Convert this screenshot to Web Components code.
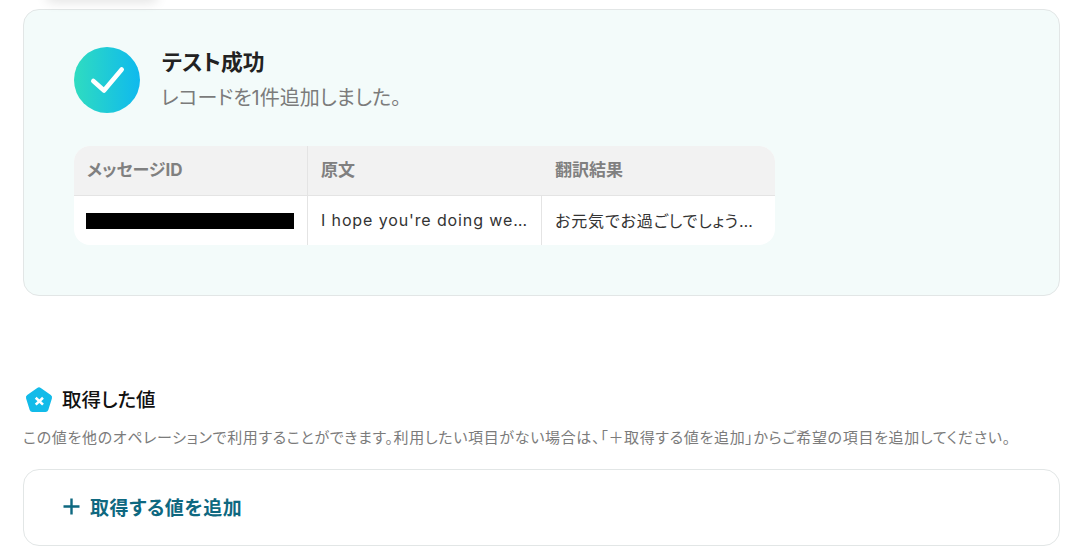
<!DOCTYPE html>
<html lang="ja">
<head>
<meta charset="utf-8">
<title>テスト成功</title>
<style>
html, body { margin: 0; background: #fff; height: 552px; overflow: hidden; }
body { font-family: Inter, "Noto Sans CJK JP", sans-serif; color: #222; font-feature-settings: "palt"; }
</style>
</head>
<body>
<result-page>
  <success-card title-text="テスト成功" message="レコードを1件追加しました。">
    <result-table></result-table>
  </success-card>
  <values-section heading="取得した値" note="この値を他のオペレーションで利用することができます。利用したい項目がない場合は、「＋取得する値を追加」からご希望の項目を追加してください。">
    <add-value-button>取得する値を追加</add-value-button>
  </values-section>
</result-page>

<script>
class ResultPage extends HTMLElement {
    connectedCallback() {
        this.attachShadow({mode: "open"}).innerHTML = `
<style>
:host { display: flex; flex-direction: column; padding: 9px 26px 0 23px; position: relative; height: 552px; box-sizing: border-box; }
.shadow { position: absolute; left: 46px; top: -12px; width: 112px; height: 12px; border-radius: 8px; box-shadow: 0 2px 12px rgba(0,0,0,.12); }
</style>
<div class="shadow"></div>
<slot></slot>`;
    }
}

class SuccessCard extends HTMLElement {
    connectedCallback() {
        this.attachShadow({mode: "open"}).innerHTML = `
<style>
:host { display: block; box-sizing: border-box; height: 287px; padding: 37px 50px 0; background: #f3fbfa; border: 1px solid #e2e6e6; border-radius: 16px; }
.head { display: flex; align-items: center; gap: 21px; margin-bottom: 33px; }
.icon { width: 66px; height: 66px; display: block; flex: none; }
h2 { margin: 0 0 0 1px; font-size: 21.800px; line-height: 30px; font-weight: 700; color: #222; }
p { margin: 6px 0 0; font-size: 20px; line-height: 30px; color: #7b7b7b; }
</style>
<div class="head">
  <svg class="icon" viewBox="0 0 66 66">
    <defs><linearGradient id="g" x1="0" y1="0" x2="1" y2="0"><stop offset="0" stop-color="#2fdcc0"/><stop offset="1" stop-color="#0fb9ee"/></linearGradient></defs>
    <circle cx="33" cy="33" r="33" fill="url(#g)"/>
    <path d="M19.300 34 L30 43.500 L47.700 22.500" fill="none" stroke="#fff" stroke-width="4.600" stroke-linecap="round" stroke-linejoin="round"/>
  </svg>
  <div><h2>${this.getAttribute("title-text")}</h2><p>${this.getAttribute("message")}</p></div>
</div>
<slot></slot>`;
    }
}

class ResultTable extends HTMLElement {
    connectedCallback() {
        let heads = ["メッセージID", "原文", "翻訳結果"];
        this.attachShadow({mode: "open"}).innerHTML = `
<style>
:host { display: grid; grid-template-columns: repeat(3, 234px); width: 701px; height: 99px; grid-template-rows: 50px 49px; background: #fff; border-radius: 16px; overflow: hidden; }
.th, .td { box-sizing: border-box; padding: 0 13px; display: flex; align-items: center; min-width: 0; border-right: 1px solid #e4e4e4; }
.th:nth-child(3), .td:last-child { border-right: 0; }
.th { background: #f2f2f2; border-bottom: 1px solid #e4e4e4; font-size: 17px; font-weight: 700; color: #808080; padding-bottom: 5px; }
.td { font-size: 16px; color: #333; letter-spacing: .055em; padding-bottom: 2px; }
.td span { overflow: hidden; white-space: nowrap; text-overflow: ellipsis; }
.mask { display: block; width: 208px; height: 16px; background: #000; margin-top: 1px; }
.td.first { padding: 0 12px; }
</style>
${heads.map(h => `<div class="th">${h}</div>`).join("")}
<div class="td first"><i class="mask"></i></div>
<div class="td"><span>I hope you're doing well today</span></div>
<div class="td"><span>お元気でお過ごしでしょうか今日は</span></div>`;
    }
}

class ValuesSection extends HTMLElement {
    connectedCallback() {
        this.attachShadow({mode: "open"}).innerHTML = `
<style>
:host { display: block; margin-top: 88px; }
.title { display: flex; align-items: center; gap: 8px; margin-left: 1px; height: 32px; }
svg { width: 30px; height: 30px; display: block; flex: none; }
h3 { margin: 0; font-size: 19.500px; line-height: 32px; font-weight: 500; color: #111; }
p { margin: 12px 0 21px; font-size: 15px; letter-spacing: .045em; line-height: 20px; color: #7b7b7b; white-space: nowrap; }
</style>
<div class="title">
  <svg viewBox="0 0 30 30">
    <path d="M13.200 2.900 a3 3 0 0 1 3.600 0 L26.800 10 a3 3 0 0 1 1.100 3.400 L24.300 25 a3 3 0 0 1 -2.900 2 H8.600 a3 3 0 0 1 -2.900 -2 L2.100 13.400 A3 3 0 0 1 3.200 10 Z" fill="#12bbe9"/>
    <path d="M11.700 12.800 L19 19.600 M19 12.800 L11.700 19.600" fill="none" stroke="#fff" stroke-width="2.600"/>
  </svg>
  <h3>${this.getAttribute("heading")}</h3>
</div>
<p>${this.getAttribute("note")}</p>
<slot></slot>`;
    }
}

class AddValueButton extends HTMLElement {
    connectedCallback() {
        this.attachShadow({mode: "open"}).innerHTML = `
<style>
:host { display: flex; align-items: center; gap: 9px; box-sizing: border-box; height: 77px; padding: 0 0 2px 38px; background: #fff; border: 1px solid #e2e6e6; border-radius: 16px; color: #0e6880; font-size: 19px; letter-spacing: .03em; font-weight: 700; }
svg { width: 19px; height: 19px; display: block; flex: none; }
</style>
<svg viewBox="0 0 19 19"><path d="M9.500 1.500 V17.500 M1.500 9.500 H17.500" stroke="#0e6880" stroke-width="2.400" fill="none"/></svg>
<slot></slot>`;
    }
}

customElements.define("result-page", ResultPage);
customElements.define("success-card", SuccessCard);
customElements.define("result-table", ResultTable);
customElements.define("values-section", ValuesSection);
customElements.define("add-value-button", AddValueButton);
</script>
</body>
</html>
